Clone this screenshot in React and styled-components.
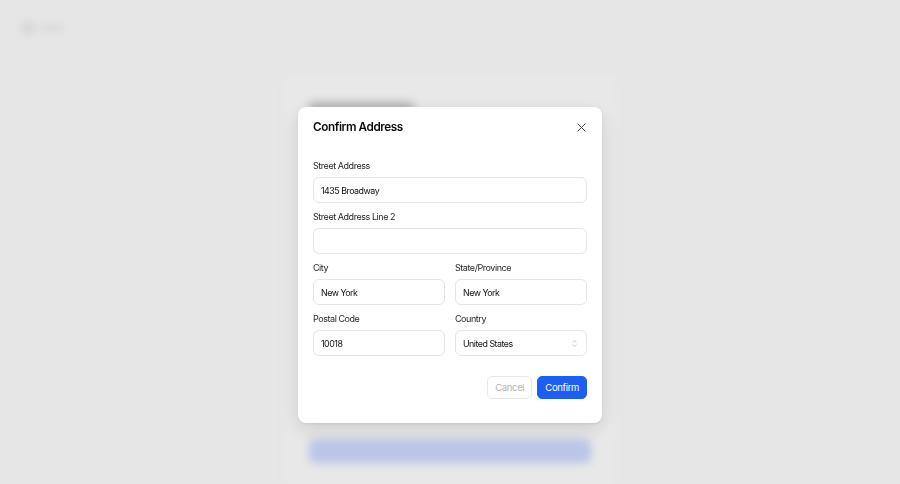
import React from "react";
import styled, { createGlobalStyle } from "styled-components";

const GlobalStyle = createGlobalStyle`
  * { box-sizing: border-box; }
  html, body { margin: 0; padding: 0; }
  body {
    font-family: Inter, "Noto Sans", "Liberation Sans", sans-serif;
    background: #fdfdfd;
    color: #111;
  }
`;

const Page = styled.div`
  height: 484px;
  overflow: hidden;
  filter: blur(4px);
  background: #fdfdfd;
  display: flex;
  flex-direction: column;
`;

const TopBar = styled.header`
  display: flex;
  align-items: center;
  gap: 6px;
  padding: 22px 22px 0;
`;

const LogoMark = styled.div`
  width: 12px;
  height: 12px;
  border-radius: 50%;
  background: #e6e6e6;
`;

const LogoText = styled.div`
  width: 24px;
  height: 6px;
  border-radius: 3px;
  background: #eeeeee;
`;

const Main = styled.main`
  flex: 1;
  display: flex;
  justify-content: center;
  padding-top: 40px;
`;

const BackCard = styled.section`
  width: 334px;
  background: #ffffff;
  box-shadow: 0 0 10px rgba(0, 0, 0, 0.03);
  padding: 28px 26px;
  display: flex;
  flex-direction: column;
  gap: 20px;
`;

const BackHeading = styled.div`
  width: 105px;
  height: 12px;
  border-radius: 4px;
  background: #c8c8c8;
`;

const BackBody = styled.div`
  height: 285px;
`;

const BackButton = styled.div`
  height: 24px;
  border-radius: 6px;
  background: #cdd9ff;
`;

const Overlay = styled.div`
  position: fixed;
  inset: 0;
  background: rgba(0, 0, 0, 0.09);
  display: flex;
  justify-content: center;
  align-items: flex-start;
  padding-top: 107px;
`;

const Modal = styled.div`
  width: 304px;
  background: #ffffff;
  border-radius: 8px;
  box-shadow: 0 6px 20px rgba(0, 0, 0, 0.12), 0 1px 3px rgba(0, 0, 0, 0.08);
  padding: 10px 15px 24px;
  display: flex;
  flex-direction: column;
`;

const ModalHeader = styled.div`
  display: flex;
  align-items: center;
  justify-content: space-between;
  height: 20px;
  margin-bottom: 22px;
`;

const Title = styled.h2`
  margin: 0;
  font-size: 11.7px;
  font-weight: 600;
  color: #0a0a0a;
  letter-spacing: -0.4px;
`;

const CloseButton = styled.button`
  border: none;
  background: none;
  padding: 0;
  margin-right: -1px;
  width: 14px;
  height: 14px;
  display: flex;
  align-items: center;
  justify-content: center;
  color: #404040;
  cursor: pointer;
`;

const Form = styled.div`
  display: flex;
  flex-direction: column;
  gap: 7px;
`;

const Row = styled.div`
  display: grid;
  grid-template-columns: 1fr 1fr;
  gap: 10px;
`;

const Field = styled.label`
  display: flex;
  flex-direction: column;
  gap: 5px;
`;

const Label = styled.span`
  font-size: 9px;
  line-height: 13px;
  letter-spacing: -0.45px;
  color: #262626;
`;

const Input = styled.input`
  height: 26px;
  width: 100%;
  border: 1px solid #e5e5e5;
  border-radius: 6px;
  padding: 0 7px;
  font-family: inherit;
  font-size: 8.9px;
  letter-spacing: -0.5px;
  color: #111;
  background: #fff;
  outline: none;
`;

const SelectBox = styled.div`
  height: 26px;
  border: 1px solid #e5e5e5;
  border-radius: 6px;
  padding: 0 8px 0 7px;
  display: flex;
  align-items: center;
  justify-content: space-between;
  font-size: 8.9px;
  letter-spacing: -0.5px;
  color: #111;
`;

const Actions = styled.div`
  display: flex;
  justify-content: flex-end;
  gap: 5px;
  margin-top: 20px;
`;

const Button = styled.button`
  height: 23px;
  padding: 0 7px;
  border-radius: 5px;
  font-family: inherit;
  font-size: 9.5px;
  letter-spacing: -0.35px;
  border: 1px solid ${({ $primary }) => ($primary ? "#1d5ff2" : "#e8e8e8")};
  background: ${({ $primary }) => ($primary ? "#1d5ff2" : "#ffffff")};
  color: ${({ $primary }) => ($primary ? "#ffffff" : "#b3b3b3")};
  cursor: ${({ disabled }) => (disabled ? "default" : "pointer")};
`;

const XIcon = () => (
  <svg width="9" height="9" viewBox="0 0 10 10" fill="none" stroke="currentColor" strokeWidth="1.1" strokeLinecap="round">
    <path d="M1 1l8 8M9 1L1 9" />
  </svg>
);

const ChevronsIcon = () => (
  <svg width="7" height="9" viewBox="0 0 8 10" fill="none" stroke="#c4c4c4" strokeWidth="1" strokeLinecap="round" strokeLinejoin="round">
    <path d="M2 3.5L4 1.5l2 2M2 6.5l2 2 2-2" />
  </svg>
);

const fields = {
  street: "1435 Broadway",
  street2: "",
  city: "New York",
  state: "New York",
  postal: "10018",
  country: "United States",
};

export default function App() {
  return (
    <>
      <GlobalStyle />
      <Page>
        <TopBar>
          <LogoMark />
          <LogoText />
        </TopBar>
        <Main>
          <BackCard>
            <BackHeading />
            <BackBody />
            <BackButton />
          </BackCard>
        </Main>
      </Page>
      <Overlay>
        <Modal>
          <ModalHeader>
            <Title>Confirm Address</Title>
            <CloseButton aria-label="Close">
              <XIcon />
            </CloseButton>
          </ModalHeader>
          <Form>
            <Field>
              <Label>Street Address</Label>
              <Input defaultValue={fields.street} />
            </Field>
            <Field>
              <Label>Street Address Line 2</Label>
              <Input defaultValue={fields.street2} />
            </Field>
            <Row>
              <Field>
                <Label>City</Label>
                <Input defaultValue={fields.city} />
              </Field>
              <Field>
                <Label>State/Province</Label>
                <Input defaultValue={fields.state} />
              </Field>
            </Row>
            <Row>
              <Field>
                <Label>Postal Code</Label>
                <Input defaultValue={fields.postal} />
              </Field>
              <Field>
                <Label>Country</Label>
                <SelectBox>
                  <span>{fields.country}</span>
                  <ChevronsIcon />
                </SelectBox>
              </Field>
            </Row>
          </Form>
          <Actions>
            <Button disabled>Cancel</Button>
            <Button $primary>Confirm</Button>
          </Actions>
        </Modal>
      </Overlay>
    </>
  );
}
